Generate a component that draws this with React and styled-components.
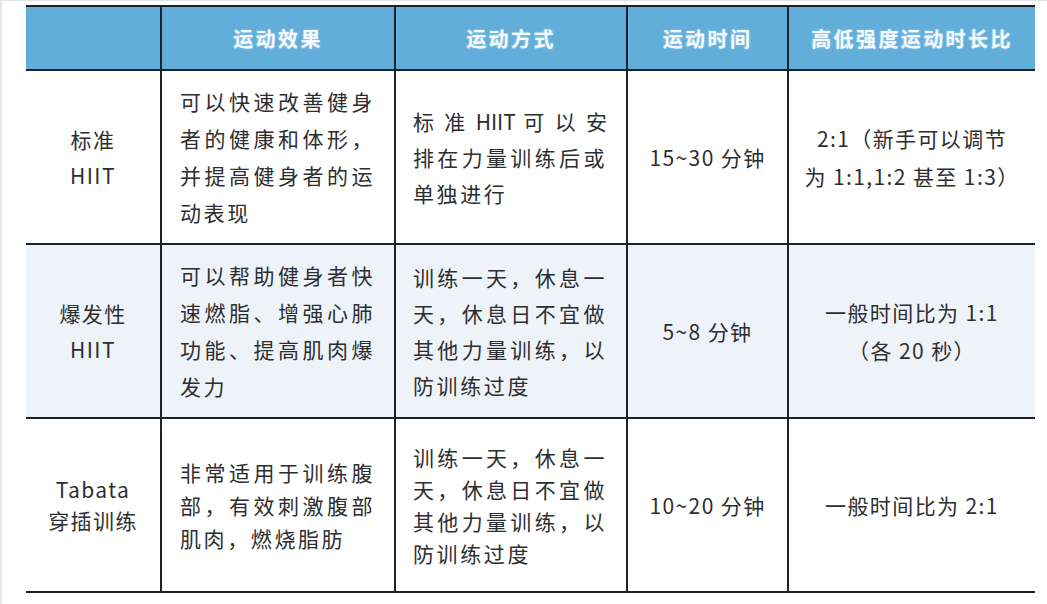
import React from "react";
import styled, { createGlobalStyle } from "styled-components";

const Global = createGlobalStyle`
  html, body { margin: 0; padding: 0; background: #ffffff; }
  body {
    width: 1047px;
    height: 604px;
    overflow: hidden;
    box-sizing: border-box;
    border-top: 1px solid #e2e4e8;
    border-left: 2px solid #e4e6ea;
    font-family: "Noto Sans CJK SC", "Noto Sans", sans-serif;
  }
`;

const COLS = "134px 234px 232px 161px 248px";

const Table = styled.div`
  margin: 4px 0 0 24px;
  width: 1009px;
  border-bottom: 2px solid #1c222c;
`;

const Row = styled.div`
  display: grid;
  grid-template-columns: ${COLS};
  height: ${(p) => p.$h}px;
  box-sizing: border-box;
  border-top: 2px solid #1c222c;
  background: ${(p) => p.$bg || "#ffffff"};
`;

const HeadCell = styled.div`
  display: flex;
  align-items: center;
  justify-content: center;
  box-sizing: border-box;
  border-left: ${(p) => (p.$first ? "none" : "2px solid #1c222c")};
  color: #f4f9fd;
  font-size: 20px;
  font-weight: 700;
  letter-spacing: 2.4px;
  text-shadow: 0 0 2px rgba(255, 255, 255, 0.55);
`;

const Cell = styled.div`
  display: flex;
  flex-direction: column;
  justify-content: center;
  align-items: ${(p) => (p.$center ? "center" : "stretch")};
  box-sizing: border-box;
  padding: ${(p) => (p.$center ? "0 6px" : `0 ${p.$pr || 18}px 0 ${p.$pl || 18}px`)};
  border-left: ${(p) => (p.$first ? "none" : "2px solid #1c222c")};
  color: #2e2e30;
  font-size: 21px;
  letter-spacing: ${(p) => (p.$center ? "1.4px" : "2.6px")};
  line-height: ${(p) => p.$lh || 37}px;
`;

const Line = styled.div`
  white-space: nowrap;
  text-align: ${(p) => (p.$justify ? "justify" : p.$center ? "center" : "left")};
  text-align-last: ${(p) => (p.$justify ? "justify" : p.$center ? "center" : "left")};
  ${(p) => (p.$ls != null ? `letter-spacing: ${p.$ls}px;` : "")}
`;

const Lines = ({ lines, justify, center }) =>
  lines.map((l, i) => {
    const text = typeof l === "string" ? l : l.t;
    const ls = typeof l === "string" ? null : l.ls;
    return (
      <Line key={i} $justify={justify && i < lines.length - 1} $center={center} $ls={ls}>
        {text}
      </Line>
    );
  });

const headers = ["", "运动效果", "运动方式", "运动时间", "高低强度运动时长比"];

const rows = [
  {
    bg: "#ffffff",
    tight: false,
    name: ["标准", "HIIT"],
    effect: ["可以快速改善健身", "者的健康和体形，", "并提高健身者的运", "动表现"],
    method: [{ t: "标 准 HIIT 可 以 安", ls: 0 }, "排在力量训练后或", "单独进行"],
    time: ["15~30 分钟"],
    ratio: ["2:1（新手可以调节", "为 1:1,1:2 甚至 1:3）"],
  },
  {
    bg: "#eef3fa",
    tight: false,
    name: ["爆发性", "HIIT"],
    effect: ["可以帮助健身者快", "速燃脂、增强心肺", "功能、提高肌肉爆", "发力"],
    method: ["训练一天，休息一", "天，休息日不宜做", "其他力量训练，以", "防训练过度"],
    time: ["5~8 分钟"],
    ratio: ["一般时间比为 1:1", "（各 20 秒）"],
  },
  {
    bg: "#ffffff",
    tight: true,
    name: ["Tabata", "穿插训练"],
    effect: ["非常适用于训练腹", "部，有效刺激腹部", "肌肉，燃烧脂肪"],
    method: ["训练一天，休息一", "天，休息日不宜做", "其他力量训练，以", "防训练过度"],
    time: ["10~20 分钟"],
    ratio: ["一般时间比为 2:1"],
  },
];

export default function App() {
  return (
    <>
      <Global />
      <Table>
        <Row $h={64} $bg="#62aedb">
          {headers.map((h, i) => (
            <HeadCell key={i} $first={i === 0}>
              {h}
            </HeadCell>
          ))}
        </Row>
        {rows.map((r, i) => (
          <Row key={i} $h={174} $bg={r.bg}>
            <Cell $first $center $lh={r.tight ? 31 : 36}>
              <Lines lines={r.name} center />
            </Cell>
            <Cell $pl={18} $pr={19} $lh={r.tight ? 33 : 37}>
              <Lines lines={r.effect} justify />
            </Cell>
            <Cell $pl={17} $pr={19} $lh={r.tight ? 32 : 36}>
              <Lines lines={r.method} justify />
            </Cell>
            <Cell $center>
              <Lines lines={r.time} center />
            </Cell>
            <Cell $center $lh={38}>
              <Lines lines={r.ratio} center />
            </Cell>
          </Row>
        ))}
      </Table>
    </>
  );
}
